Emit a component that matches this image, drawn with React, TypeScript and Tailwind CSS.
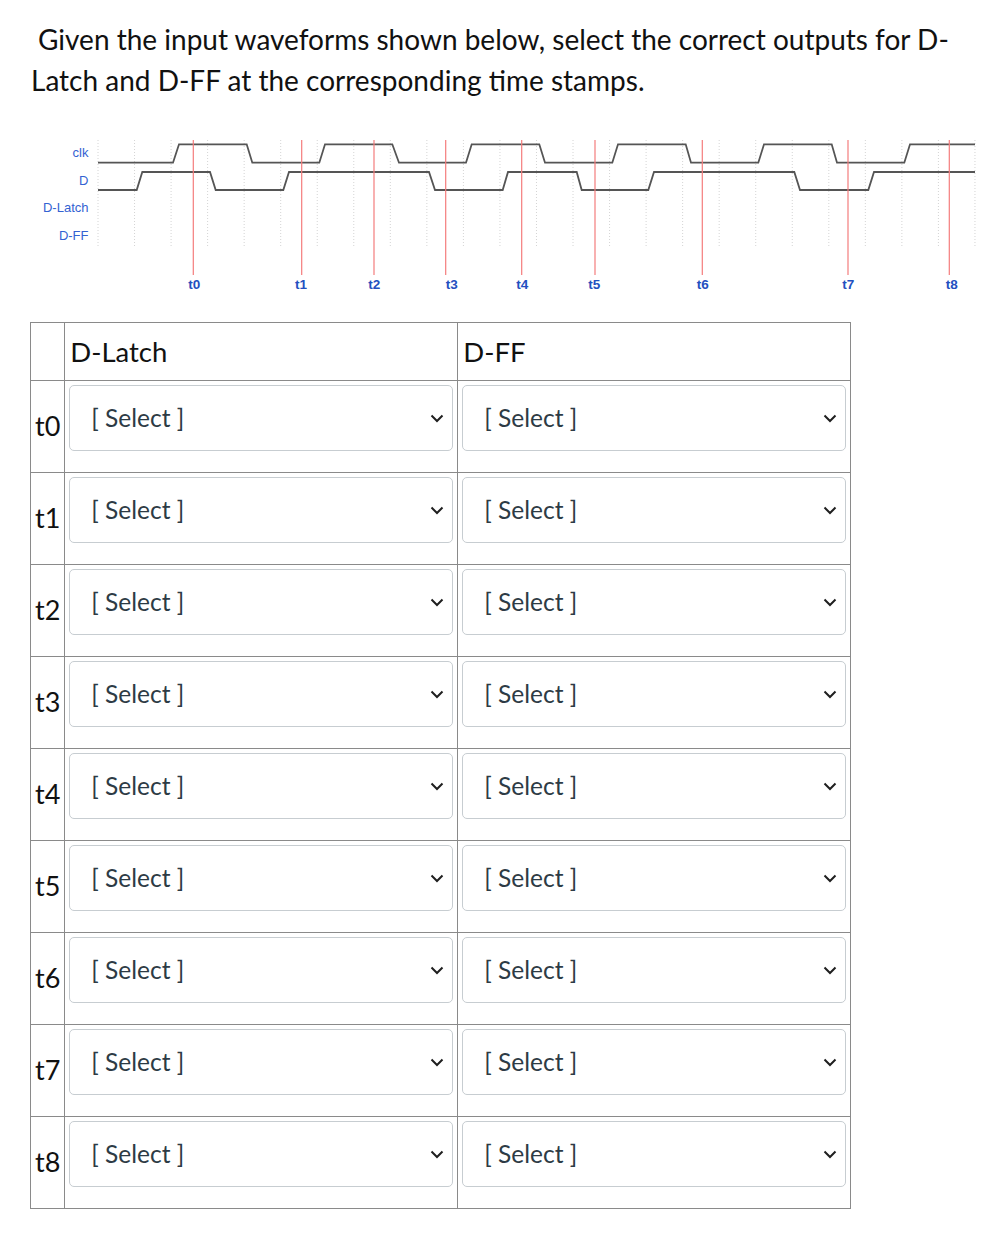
import React from 'react';

const times = ['t0', 't1', 't2', 't3', 't4', 't5', 't6', 't7', 't8'];
const markers = [193.3, 301.7, 374, 445.7, 521.7, 595, 702.3, 848, 949.3];
const labelX = [194.3, 301, 374.3, 451.7, 522.3, 594.3, 702.7, 848.3, 951.7];

const clkPath =
    'M98 162.7 H173 L179 144.3 H246.7 L252.3 162.7 H319.3 L325 144.3 H392.3 L399 162.7 H466 L471.7 144.3 H539.3 L545 162.7 H612.3 L618 144.3 H685.7 L691 162.7 H758.3 L764 144.3 H831.7 L837 162.7 H904.3 L910 144.3 H975';
const dPath =
    'M98 190 H136.7 L142.3 172 H210 L215.7 190 H283.3 L289 172 H429 L435 190 H502.7 L508 172 H576.7 L581.7 190 H648.3 L654 172 H794.3 L800 190 H868.3 L874 172 H975';

const Waveform = () => {
    const grid = Array.from({ length: 25 }, (_, k) => 98 + k * 36.54);
    const labels = [
        { text: 'clk', y: 154 },
        { text: 'D', y: 181.5 },
        { text: 'D-Latch', y: 209 },
        { text: 'D-FF', y: 236.5 },
    ];

    return (
        <svg width="1002" height="170" viewBox="0 130 1002 170" className="block">
            {/* dotted grid */}
            {grid.map((x) => (
                <line key={x} x1={x} y1={140} x2={x} y2={247} stroke="#d4d4d4" strokeWidth={1} strokeDasharray="1 2" />
            ))}

            {/* signal names */}
            {labels.map((l) => (
                <text
                    key={l.text}
                    x={88.5}
                    y={l.y}
                    textAnchor="end"
                    dominantBaseline="middle"
                    fontFamily="'Liberation Sans', Arial, sans-serif"
                    fontSize={13}
                    fill="#3462d2"
                >
                    {l.text}
                </text>
            ))}

            {/* waves */}
            <path d={clkPath} fill="none" stroke="#555" strokeWidth={1.8} />
            <path d={dPath} fill="none" stroke="#555" strokeWidth={1.8} />

            {/* time markers */}
            {markers.map((x, i) => (
                <g key={x}>
                    <line x1={x} y1={140} x2={x} y2={275} stroke="#f47c7c" strokeWidth={1.2} />
                    <text
                        x={labelX[i]}
                        y={285.5}
                        textAnchor="middle"
                        dominantBaseline="middle"
                        fontFamily="'Liberation Sans', Arial, sans-serif"
                        fontSize={13.5}
                        fontWeight="bold"
                        fill="#2350c0"
                    >
                        {times[i]}
                    </text>
                </g>
            ))}
        </svg>
    );
};

const SelectBox = () => (
    <div className="flex h-[66px] items-center justify-between rounded-[5px] border border-[#c7cdd1] bg-white pl-[21px] pr-[8px]">
        <span className="text-[24.5px] text-[#2d3b45]">[ Select ]</span>
        <svg width="14" height="9" viewBox="0 0 14 9">
            <polyline points="1.5,1.5 7,7 12.5,1.5" fill="none" stroke="#1f1f1f" strokeWidth={2} />
        </svg>
    </div>
);

const App = () => {
    return (
        <div className="min-h-[1247px] w-[1002px] bg-white pt-[19px] text-[#111] [font-family:Lato,'Noto_Sans',sans-serif]">
            {/* Question text */}
            <p className="ml-[31px] w-[935px] indent-[7px] text-[28px] leading-[41px]">
                Given the input waveforms shown below, select the correct outputs for D-Latch and D-FF at the corresponding time stamps.
            </p>

            {/* Waveform diagram */}
            <div className="mt-[29px]">
                <Waveform />
            </div>

            {/* Answer table */}
            <table className="ml-[30px] mt-[22px] table-fixed border-collapse">
                <colgroup>
                    <col className="w-[34px]" />
                    <col className="w-[393px]" />
                    <col className="w-[393px]" />
                </colgroup>
                <thead>
                    <tr className="h-[58px]">
                        <th className="border border-[#8a8a8a]"></th>
                        <th className="border border-[#8a8a8a] px-[5px] text-left text-[27.5px] font-normal">D-Latch</th>
                        <th className="border border-[#8a8a8a] px-[5px] text-left text-[27.5px] font-normal">D-FF</th>
                    </tr>
                </thead>
                <tbody>
                    {times.map((t) => (
                        <tr key={t} className="h-[92px]">
                            <td className="border border-[#8a8a8a] px-[4px] text-[27px]">{t}</td>
                            <td className="border border-[#8a8a8a] px-[4px] pb-[21px] pt-[4px] align-top">
                                <SelectBox />
                            </td>
                            <td className="border border-[#8a8a8a] px-[4px] pb-[21px] pt-[4px] align-top">
                                <SelectBox />
                            </td>
                        </tr>
                    ))}
                </tbody>
            </table>
        </div>
    );
};

export default App;
